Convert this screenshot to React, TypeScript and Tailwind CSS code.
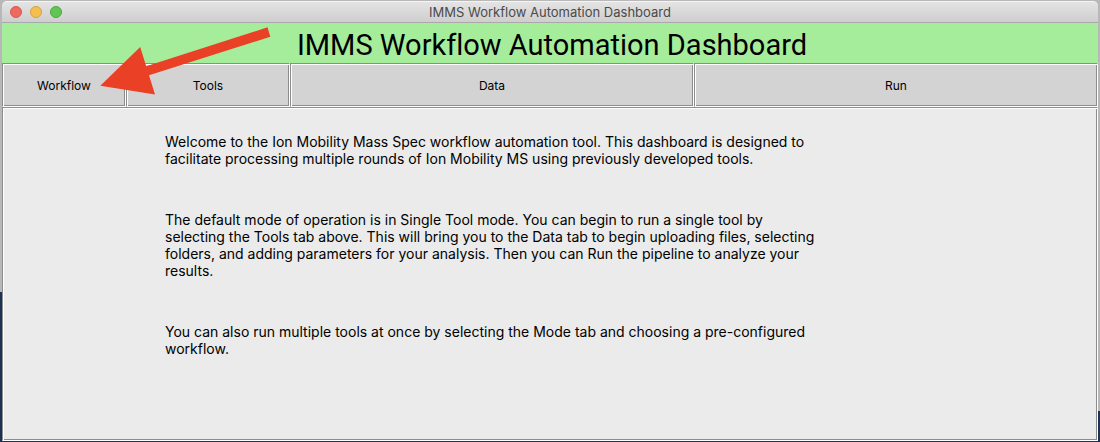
const tabs = [
  { label: "Workflow", size: "w-[124px]" },
  { label: "Tools", size: "w-[164px]" },
  { label: "Data", size: "flex-1" },
  { label: "Run", size: "flex-1" },
];

const paragraphs = [
  "Welcome to the Ion Mobility Mass Spec workflow automation tool. This dashboard is designed to facilitate processing multiple rounds of Ion Mobility MS using previously developed tools.",
  "The default mode of operation is in Single Tool mode. You can begin to run a single tool by selecting the Tools tab above. This will bring you to the Data tab to begin uploading files, selecting folders, and adding parameters for your analysis. Then you can Run the pipeline to analyze your results.",
  "You can also run multiple tools at once by selecting the Mode tab and choosing a pre-configured workflow.",
];

// Two-tone etched border: grey outside and white inside on the top and left, the reverse on the bottom and right.
const groove =
  "border border-t-[#8c8c8c] border-l-[#8c8c8c] border-r-white border-b-white shadow-[inset_1px_1px_0_white,inset_-1px_-1px_0_#8c8c8c]";

function TitleBar() {
  return (
    <header className="relative flex h-[22px] items-center justify-center rounded-t-[5px] border-t border-b border-t-[#f4f4f4] border-b-[#a9a9a9] bg-linear-to-b from-[#e4e4e4] to-[#cecece]">
      <div className="absolute left-2 flex gap-2">
        <button aria-label="Close" className="size-3 rounded-full border border-[#d8584f] bg-[#ee6a5f]" />
        <button aria-label="Minimize" className="size-3 rounded-full border border-[#d9a13c] bg-[#f5bf4f]" />
        <button aria-label="Zoom" className="size-3 rounded-full border border-[#4ca73d] bg-[#61c554]" />
      </div>
      <span className="text-[13px] leading-4 text-[#4a4a4a]">IMMS Workflow Automation Dashboard</span>
    </header>
  );
}

function Arrow() {
  return (
    <svg
      className="pointer-events-none absolute top-[27px] left-[98px]"
      width="174"
      height="68"
      viewBox="0 0 174 68"
      aria-hidden="true"
    >
      <path d="M2.3 58.7 L42.2 20 L48.2 39.2 L169.5 0.3 L172.3 9.8 L51 48.3 L57 67.6 Z" fill="#ea4025" />
    </svg>
  );
}

export default function App() {
  return (
    <div className="relative flex min-h-screen bg-[#b8b8b8] font-['Inter',sans-serif] text-black">
      <div className="w-[2px] bg-linear-to-b from-[#b8b8b8] from-66% to-[#1c3154] to-66%" />
      <div className="flex flex-1 flex-col border-t border-b border-t-[#b8b8b8] border-b-[#26334a]">
        <TitleBar />
        <h1 className="bg-[#a6ed9b] pt-1 pl-1 text-center font-['Roboto',sans-serif] text-[29px] leading-9 [font-variant-ligatures:none]">
          IMMS Workflow Automation Dashboard
        </h1>
        <nav className="flex h-11">
          {tabs.map((tab) => (
            <button key={tab.label} className={`${tab.size} ${groove} bg-[#d3d3d3] pt-px text-[12px] leading-4`}>
              {tab.label}
            </button>
          ))}
        </nav>
        <main className={`${groove} flex-1 bg-[#ebebeb] pt-[25px] pb-6 pl-[162px]`}>
          <div className="flex max-w-[655px] flex-col gap-11 text-[14px] leading-[17px]">
            {paragraphs.map((text) => (
              <p key={text}>{text}</p>
            ))}
          </div>
        </main>
      </div>
      <div className="w-[2px] bg-linear-to-b from-[#b8b8b8] from-93% to-[#1c3154] to-93%" />
      <Arrow />
    </div>
  );
}
